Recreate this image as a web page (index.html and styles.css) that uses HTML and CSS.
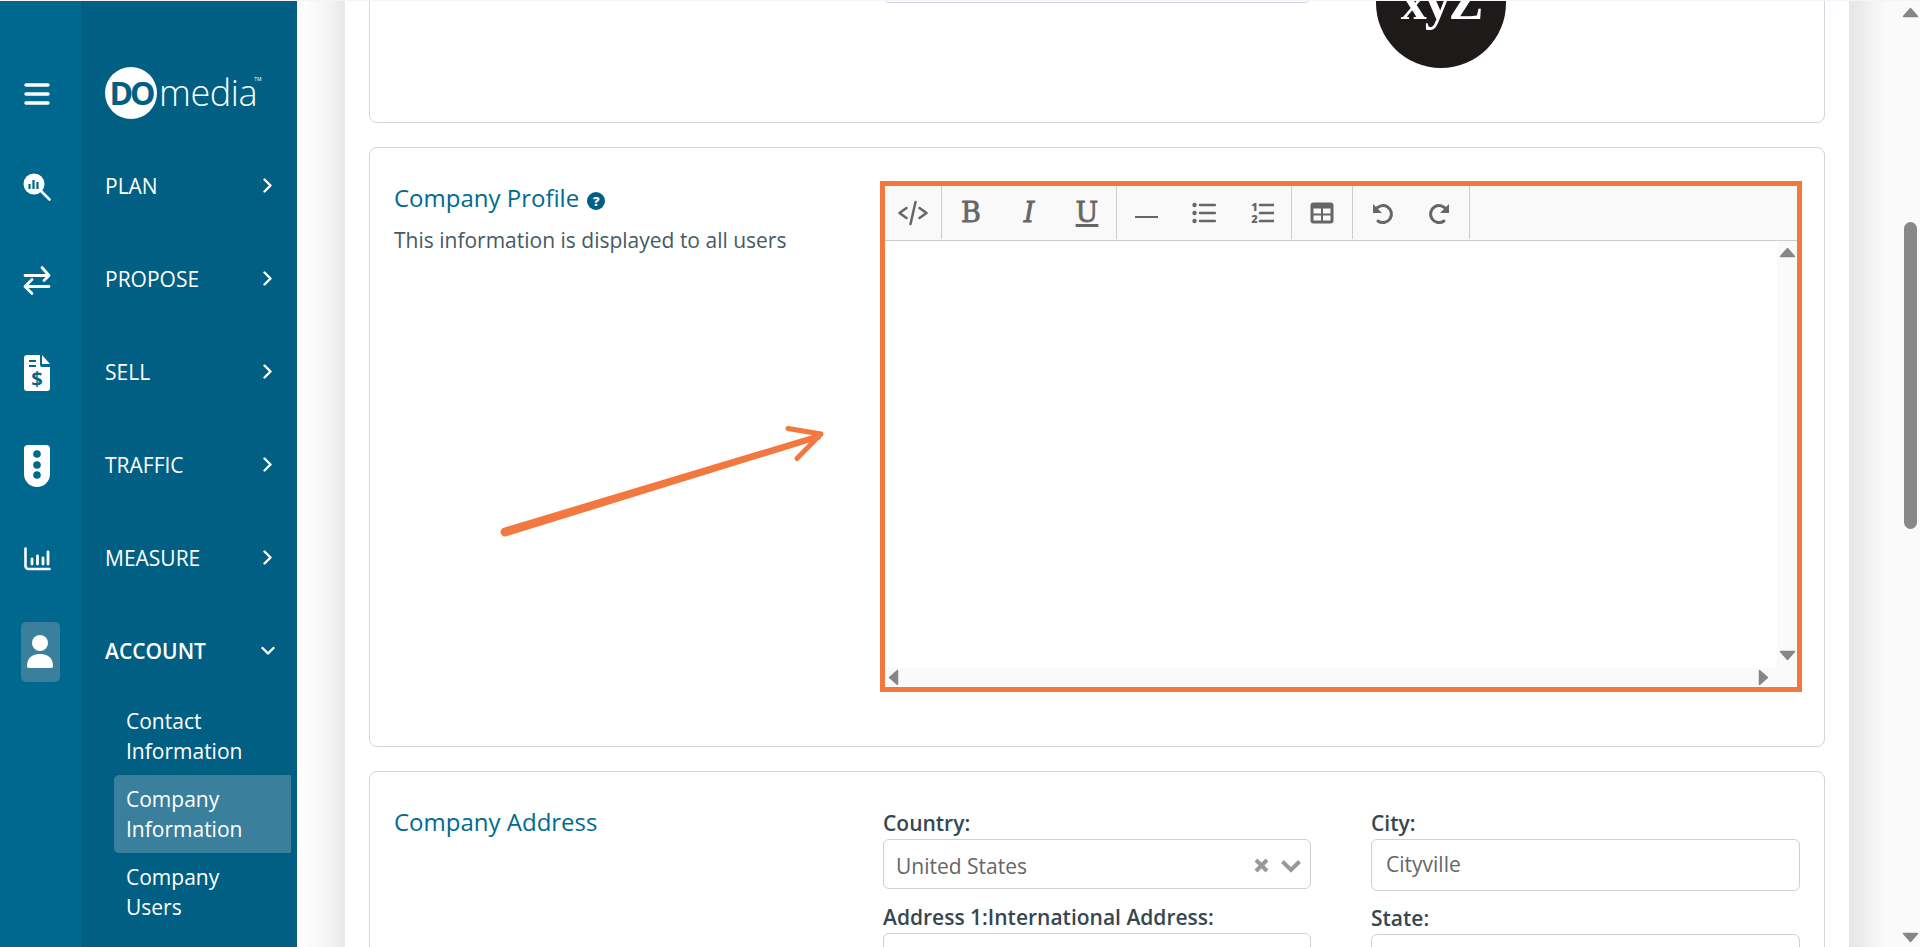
FILE: index.html

```html
<!DOCTYPE html>
<html lang="en">
  <head>
    <meta charset="UTF-8" />
    <meta name="viewport" content="width=device-width, initial-scale=1.0" />
    <title>Company Information</title>
    <link rel="stylesheet" href="styles.css">
  </head>
  <body>
    <div class="app">
      <aside class="sidebar">
        <div class="rail">
          <div class="rail-item">
            <svg width="26" height="22" viewBox="0 0 26 22"><path d="M2 2h22M2 11h22M2 20h22" stroke="#fff" stroke-width="3.4" stroke-linecap="round"/></svg>
          </div>
          <div class="rail-item">
            <svg width="28" height="28" viewBox="0 0 28 28"><circle cx="11" cy="11" r="10.5" fill="#fff"/><path d="M18 18l8.5 8.5" stroke="#fff" stroke-width="2.6" stroke-linecap="round"/><path d="M6.5 11v5M10.5 7v9M14.5 9v7" stroke="#00688f" stroke-width="2.2"/></svg>
          </div>
          <div class="rail-item">
            <svg width="28" height="32" viewBox="0 0 28 32"><path d="M2 11.5h24M19 3.500l7 8-5 5M26 22.500H2M9 15.500l-7 7 7 7" stroke="#fff" stroke-width="2.8" stroke-linecap="round" stroke-linejoin="round" fill="none"/></svg>
          </div>
          <div class="rail-item">
            <svg width="26" height="36" viewBox="0 0 26 36"><path d="M3 0h13v10a2 2 0 0 0 2 2h8v21a3 3 0 0 1-3 3H3a3 3 0 0 1-3-3V3a3 3 0 0 1 3-3z" fill="#fff"/><path d="M18 0l8 9h-8z" fill="#fff"/><path d="M5 6h7M5 11h7" stroke="#00688f" stroke-width="2.2"/><text x="13" y="31" class="dollar">$</text></svg>
          </div>
          <div class="rail-item">
            <svg width="26" height="42" viewBox="0 0 26 42"><path d="M4 0h18a4 4 0 0 1 4 4v25a13 13 0 0 1-26 0V4a4 4 0 0 1 4-4z" fill="#fff"/><circle cx="13" cy="9" r="3.800" fill="#00688f"/><circle cx="13" cy="20" r="3.800" fill="#00688f"/><circle cx="13" cy="30" r="3.800" fill="#00688f"/></svg>
          </div>
          <div class="rail-item">
            <svg width="27" height="24" viewBox="0 0 27 24"><path d="M1.500 1.500V19a3 3 0 0 0 3 3h21" stroke="#fff" stroke-width="2.600" stroke-linecap="round" fill="none"/><path d="M8 12v5M13.500 9v8M19 11v6M24 5v12" stroke="#fff" stroke-width="2.800" stroke-linecap="round"/></svg>
          </div>
          <div class="rail-item">
            <div class="rail-active">
              <svg width="28" height="34" viewBox="0 0 28 34"><circle cx="14" cy="8" r="8" fill="#fff"/><path d="M1 31c0-8 5-12 13-12s13 4 13 12c0 1-.5 2-2 2H3c-1.500 0-2-1-2-2z" fill="#fff"/></svg>
            </div>
          </div>
        </div>
        <nav class="nav">
          <div class="logo">
            <span class="logo-disc">DO</span><span class="logo-word">media</span><span class="logo-tm">TM</span>
          </div>
          <a class="nav-item">PLAN<svg width="10" height="15" viewBox="0 0 10 15"><path d="M1.500 1.500l6 6-6 6" class="chev"/></svg></a>
          <a class="nav-item">PROPOSE<svg width="10" height="15" viewBox="0 0 10 15"><path d="M1.500 1.500l6 6-6 6" class="chev"/></svg></a>
          <a class="nav-item">SELL<svg width="10" height="15" viewBox="0 0 10 15"><path d="M1.500 1.500l6 6-6 6" class="chev"/></svg></a>
          <a class="nav-item">TRAFFIC<svg width="10" height="15" viewBox="0 0 10 15"><path d="M1.500 1.500l6 6-6 6" class="chev"/></svg></a>
          <a class="nav-item">MEASURE<svg width="10" height="15" viewBox="0 0 10 15"><path d="M1.500 1.500l6 6-6 6" class="chev"/></svg></a>
          <a class="nav-item nav-open">ACCOUNT<svg width="14" height="10" viewBox="0 0 14 10"><path d="M1.500 2l5.500 5.500L12.500 2" class="chev"/></svg></a>
          <a class="sub-item">Contact Information</a>
          <a class="sub-item active">Company Information</a>
          <a class="sub-item">Company Users</a>
        </nav>
      </aside>

      <div class="gutter-left"></div>

      <main class="content">
        <div class="scroll-inner">
          <section class="card card-logo">
            <div class="side"></div>
            <div class="fields">
              <div class="field-stack"><input class="input logo-input" type="text"></div>
              <div class="company-logo">
                <svg width="130" height="130" viewBox="0 0 130 130"><circle cx="65" cy="65" r="65" fill="#1f1a1a"/><text x="65" y="81" class="xyz">xyZ</text></svg>
              </div>
            </div>
          </section>

          <section class="card card-profile">
            <div class="side">
              <h2 class="card-title">Company Profile <span class="help">?</span></h2>
              <p class="card-note">This information is displayed to all users</p>
            </div>
            <div class="editor">
              <div class="toolbar">
                <div class="tool-group">
                  <button class="tool"><svg width="30" height="26" viewBox="0 0 30 26"><path d="M8.500 8l-7 5 7 5M21.500 8l7 5-7 5M17.500 2l-5 22" class="tool-line"/></svg></button>
                </div>
                <div class="tool-group">
                  <button class="tool tool-b">B</button>
                  <button class="tool tool-i">I</button>
                  <button class="tool tool-u">U</button>
                </div>
                <div class="tool-group">
                  <button class="tool"><svg width="23" height="24" viewBox="0 0 23 24"><path d="M0 16h23" stroke="#666" stroke-width="2"/></svg></button>
                  <button class="tool"><svg width="24" height="22" viewBox="0 0 24 22"><circle cx="2.500" cy="3" r="2.200" class="ico"/><circle cx="2.500" cy="11" r="2.200" class="ico"/><circle cx="2.500" cy="19" r="2.200" class="ico"/><path d="M8 3h15M8 11h15M8 19h15" class="tool-line"/></svg></button>
                  <button class="tool ol-tool"><svg width="24" height="32" viewBox="0 -5 24 32"><text x="4.500" y="9" class="num">1</text><text x="4.500" y="21" class="num">2</text><path d="M10 3h14M10 11h14M10 19h14" class="tool-line"/></svg></button>
                </div>
                <div class="tool-group">
                  <button class="tool"><svg width="24" height="22" viewBox="0 0 24 22"><rect x="0.500" y="0.500" width="23" height="21" rx="3" class="ico"/><rect x="3.500" y="6.500" width="7.500" height="5" fill="#f9f9f9"/><rect x="13" y="6.500" width="7.500" height="5" fill="#f9f9f9"/><rect x="3.500" y="13.500" width="7.500" height="5" fill="#f9f9f9"/><rect x="13" y="13.500" width="7.500" height="5" fill="#f9f9f9"/></svg></button>
                </div>
                <div class="tool-group">
                  <button class="tool"><svg width="24" height="24" viewBox="0 0 24 24"><path d="M5.500 9A8.500 8.500 0 1 1 8 20" class="tool-line thick"/><path d="M3 3v9h9z" class="ico"/></svg></button>
                  <button class="tool"><svg width="24" height="24" viewBox="0 0 24 24"><path d="M18.500 9A8.500 8.500 0 1 0 16 20" class="tool-line thick"/><path d="M21 3v9h-9z" class="ico"/></svg></button>
                </div>
              </div>
              <div class="editor-body">
                <div class="editor-text"></div>
                <div class="vbar">
                  <svg class="sb-arrow" width="17" height="11" viewBox="0 0 17 11"><path d="M8.500 1.500l7 8h-14z" class="arrow-tri"/></svg>
                  <svg class="sb-arrow" width="17" height="11" viewBox="0 0 17 11"><path d="M8.500 9.500l7-8h-14z" class="arrow-tri"/></svg>
                </div>
              </div>
              <div class="hbar">
                <svg class="sb-arrow" width="11" height="17" viewBox="0 0 11 17"><path d="M1.500 8.500l8-7v14z" class="arrow-tri"/></svg>
                <svg class="sb-arrow" width="11" height="17" viewBox="0 0 11 17"><path d="M9.500 8.500l-8-7v14z" class="arrow-tri"/></svg>
              </div>
            </div>
            <svg class="callout" width="340" height="120" viewBox="0 0 340 120">
              <path d="M3.690 107.690L319.100 13.100l1.800 5.800L6.310 116.310a4.500 4.500 0 0 1-2.620-8.620z" fill="#f2783f"/>
              <path d="M288 8.500l33 5.500-24 24.500" stroke="#f2783f" stroke-width="5" stroke-linecap="round" stroke-linejoin="round" fill="none"/>
            </svg>
          </section>

          <section class="card card-address">
            <div class="side">
              <h2 class="card-title address-title">Company Address</h2>
            </div>
            <div class="fields">
              <div class="field-stack">
                <label class="label">Country:</label>
                <div class="select">
                  <span>United States</span>
                  <svg width="17" height="17" viewBox="0 0 17 17"><path d="M3 3l11 11M14 3L3 14" stroke="#999" stroke-width="4"/></svg>
                  <svg width="22" height="16" viewBox="0 0 22 16"><path d="M2.500 3.500L11 12l8.500-8.500" stroke="#999" stroke-width="4" fill="none"/></svg>
                </div>
                <label class="label next-label">Address 1:International Address:</label>
                <input class="input" type="text">
              </div>
              <div class="field-stack">
                <label class="label">City:</label>
                <input class="input input-tall" type="text" value="Cityville">
                <label class="label next-label-r">State:</label>
                <input class="input" type="text">
              </div>
            </div>
          </section>
        </div>
      </main>

      <div class="gutter-right">
        <div class="scrollbar">
          <svg class="page-up" width="17" height="11" viewBox="0 0 17 11"><path d="M8.500 1.500l7 8h-14z" class="arrow-tri"/></svg>
          <div class="thumb"></div>
          <svg class="page-down" width="17" height="11" viewBox="0 0 17 11"><path d="M8.500 9.500l7-8h-14z" class="arrow-tri"/></svg>
        </div>
      </div>
    </div>
  </body>
</html>
```

FILE: styles.css

```css
* {
  box-sizing: border-box;
}
html,
body {
  height: 100%;
  margin: 0;
  overflow: hidden;
}
body {
  border-top: 1px solid #f4f4fb;
  font-family: "Open Sans", "Liberation Sans", sans-serif;
  background: #fff;
}
.app {
  display: flex;
  height: 946px;
}

/* sidebar */
.sidebar {
  display: flex;
  flex: none;
  width: 297px;
  color: #fff;
  background: #005f83;
}
.rail {
  flex: none;
  width: 81px;
  padding-top: 46px;
  background: #00688f;
}
.rail-item {
  display: flex;
  align-items: center;
  justify-content: center;
  width: 74px;
  height: 93px;
}
.rail-active {
  display: flex;
  align-items: center;
  justify-content: center;
  flex: none;
  width: 39px;
  height: 60px;
  margin-left: 6px;
  border-radius: 5px;
  background: #3a7f9c;
}
.dollar {
  font: 700 20px "Open Sans", sans-serif;
  fill: #00688f;
  text-anchor: middle;
}
.nav {
  flex: 1;
  padding-top: 45px;
}
.logo {
  display: flex;
  align-items: center;
  height: 93px;
  padding-left: 24px;
}
.logo-disc {
  display: flex;
  align-items: center;
  justify-content: center;
  flex: none;
  width: 52px;
  height: 52px;
  border-radius: 50%;
  font-size: 32px;
  font-weight: 700;
  letter-spacing: -3px;
  color: #005f83;
  background: #fff;
}
.logo-word {
  margin-left: 2px;
  font-size: 36px;
  font-weight: 300;
  letter-spacing: -0.4px;
  line-height: 1;
}
.logo-tm {
  align-self: flex-start;
  margin: 30px 0 0 -3px;
  font-size: 5px;
}
.nav-item {
  display: flex;
  align-items: center;
  justify-content: space-between;
  height: 93px;
  padding: 0 24px;
  font-size: 21px;
}
.nav-open {
  font-weight: 600;
  padding-right: 22px;
}
.chev {
  fill: none;
  stroke: #fff;
  stroke-width: 2.4;
  stroke-linecap: round;
  stroke-linejoin: round;
}
.sub-item {
  display: block;
  height: 78px;
  margin: 0 6px 0 33px;
  padding: 9px 40px 9px 12px;
  font-size: 21px;
  line-height: 30px;
}
.sub-item.active {
  border-radius: 5px 0 0 5px;
  background: #3a7f9c;
}

/* shadows either side of the page */
.gutter-left {
  flex: none;
  width: 48px;
  background: linear-gradient(90deg, #fff, #f6f6f6 60%, #e8e8e8);
}
.gutter-right {
  flex: none;
  width: 71px;
  padding-left: 51px;
  background: linear-gradient(90deg, #e5e5e5, #fafafa 36px);
}
.scrollbar {
  display: flex;
  flex-direction: column;
  align-items: center;
  height: 100%;
}
.page-up {
  margin-top: 6px;
}
.thumb {
  flex: none;
  width: 13px;
  height: 307px;
  margin-top: 204px;
  border-radius: 7px;
  background: #888;
}
.page-down {
  margin-top: auto;
  margin-bottom: 4px;
}
.arrow-tri {
  fill: #868686;
  stroke: #868686;
  stroke-width: 1.5;
  stroke-linejoin: round;
}

/* page */
.content {
  flex: 1;
  min-width: 0;
  padding: 0 24px;
  overflow: hidden;
  background: #fff;
}
.scroll-inner {
  margin-top: -101px;
}
.card {
  position: relative;
  display: flex;
  margin-bottom: 24px;
  padding: 0 24px;
  border: 1px solid #d3d4dc;
  border-radius: 8px;
}
.card-logo {
  height: 223px;
  padding-top: 37px;
}
.card-profile {
  height: 600px;
  padding-top: 33px;
}
.card-address {
  padding-top: 37px;
  padding-bottom: 40px;
}
.side {
  flex: none;
  width: 489px;
}
.fields {
  flex: 1;
  display: grid;
  grid-template-columns: 428px 429px;
  column-gap: 60px;
  align-items: start;
}
.field-stack {
  display: flex;
  flex-direction: column;
}
.card-title {
  margin: 0;
  font-size: 24px;
  font-weight: 400;
  line-height: 28px;
  color: #006a90;
}
.card-profile .card-title {
  margin-top: 3px;
}
.address-title {
  margin-top: -1px;
}
.help {
  display: inline-block;
  width: 18px;
  height: 18px;
  margin-left: 2px;
  border-radius: 50%;
  font-size: 13px;
  font-weight: 800;
  line-height: 18px;
  text-align: center;
  vertical-align: 1px;
  color: #fff;
  background: #005f83;
}
.card-note {
  margin: 14px 0 0;
  font-size: 21px;
  line-height: 28px;
  color: #455a64;
}
.label {
  margin-bottom: 2px;
  font-size: 21px;
  font-weight: 600;
  line-height: 28px;
  color: #37474f;
}
.next-label {
  margin-top: 14px;
}
.next-label-r {
  margin-top: 13px;
}
.input {
  width: 100%;
  height: 50px;
  padding: 0 14px;
  border: 1px solid #d0d1d8;
  border-radius: 6px;
  font: 400 21px "Open Sans", sans-serif;
  color: #666;
  background: #fff;
}
.input-tall {
  height: 52px;
  padding-bottom: 2px;
}
.logo-input {
  margin-top: 15px;
}
.select {
  display: flex;
  align-items: center;
  gap: 10px;
  height: 50px;
  padding: 3px 8px 0 12px;
  border: 1px solid #d0d1d8;
  border-radius: 6px;
  font-size: 21px;
  color: #666;
}
.select span {
  flex: 1;
}
.company-logo {
  padding-left: 5px;
}
.xyz {
  font: 700 52px "Liberation Serif", serif;
  letter-spacing: -2px;
  fill: #fff;
  text-anchor: middle;
}

/* editor */
.editor {
  display: flex;
  flex-direction: column;
  flex: none;
  width: 922px;
  height: 511px;
  margin-left: -3px;
  border: 5px solid #f2783f;
}
.toolbar {
  display: flex;
  flex: none;
  height: 55px;
  padding-bottom: 1px;
  border-bottom: 1px solid #ccc;
  background: #f9f9f9;
}
.tool-group {
  display: flex;
  border-right: 1px solid #ccc;
}
.tool {
  display: flex;
  align-items: center;
  justify-content: center;
  width: 58px;
  padding: 0;
  border: none;
  font-size: 27px;
  color: #666;
  background: none;
}
.tool-group:first-child .tool {
  width: 56px;
}
.tool-group:nth-child(4) .tool {
  width: 60px;
}
.tool-b,
.tool-u {
  font-family: "DejaVu Serif", serif;
  -webkit-text-stroke: 0.8px #666;
}
.tool-i {
  font-family: "DejaVu Serif", serif;
  font-style: italic;
  -webkit-text-stroke: 0.8px #666;
}
.tool-u {
  text-decoration: underline;
  text-underline-offset: 2px;
  text-decoration-thickness: 2.500px;
}
.tool-line {
  fill: none;
  stroke: #666;
  stroke-width: 2.500;
  stroke-linecap: round;
  stroke-linejoin: round;
}
.tool-line.thick {
  stroke-width: 3;
}
.ico {
  fill: #666;
}
.num {
  font: 800 11px "Open Sans", sans-serif;
  fill: #666;
  text-anchor: middle;
}
.editor-body {
  display: flex;
  flex: 1;
  min-height: 0;
}
.editor-text {
  flex: 1;
  background: #fff;
}
.vbar {
  display: flex;
  flex-direction: column;
  align-items: center;
  justify-content: space-between;
  flex: none;
  width: 20px;
  padding: 6px 0 7px;
  background: #fafafa;
}
.hbar {
  display: flex;
  align-items: center;
  justify-content: space-between;
  flex: none;
  height: 19px;
  padding: 0 28px 0 3px;
  background: #fafafa;
}
.sb-arrow {
  flex: none;
}

/* arrow drawn over the card, pointing at the editor */
.callout {
  position: absolute;
  top: 272px;
  left: 130px;
}
```
